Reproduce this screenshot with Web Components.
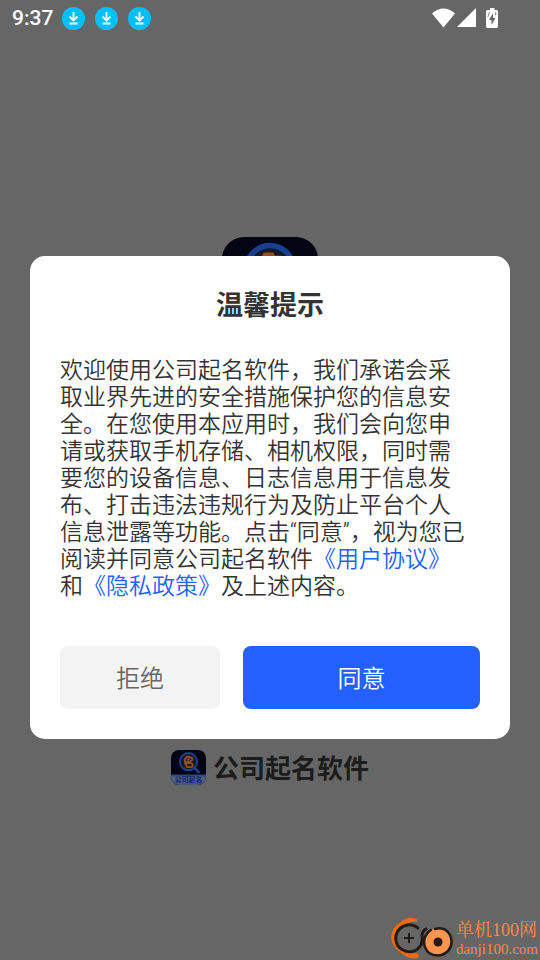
<!DOCTYPE html>
<html lang="zh-CN">
<head>
<meta charset="utf-8">
<meta name="viewport" content="width=device-width, initial-scale=1">
<title>公司起名软件</title>
<style>
html, body { margin: 0; }
body { background: #666; font-family: Roboto, "Noto Sans CJK SC", sans-serif; color: #333; }
</style>
</head>
<body>
<app-screen>
  <status-bar slot="status" time="9:37"></status-bar>
  <app-logo slot="hero"></app-logo>
  <brand-line slot="brand"><app-logo slot="icon" caption="公司起名"></app-logo>公司起名软件</brand-line>
  <consent-dialog slot="dialog" heading="温馨提示">欢迎使用公司起名软件，我们承诺会采取业界先进的安全措施保护您的信息安全。在您使用本应用时，我们会向您申请或获取手机存储、相机权限，同时需要您的设备信息、日志信息用于信息发布、打击违法违规行为及防止平台个人信息泄露等功能。点击“同意”，视为您已阅读并同意公司起名软件<policy-link>《用户协议》</policy-link>和<policy-link>《隐私政策》</policy-link>及上述内容。
    <action-button slot="actions">拒绝</action-button>
    <action-button slot="actions" primary>同意</action-button>
  </consent-dialog>
  <site-mark slot="mark"></site-mark>
</app-screen>
<script>
const define = (name, html, setup) => customElements.define(name, class extends HTMLElement {
  constructor() {
    super();
    this.attachShadow({ mode: 'open' }).innerHTML = html.trim();
  }
  connectedCallback() { if (setup) setup(this, this.shadowRoot); }
});

define('app-screen', `
<style>
:host { display: flex; flex-direction: column; min-height: 100vh; position: relative; overflow: hidden; }
main { flex: 1; display: flex; flex-direction: column; align-items: center; justify-content: space-between; padding: 201px 0 174px; }
::slotted([slot=hero]) { width: 96px; }
.layer { position: absolute; inset: 35px 0 0; display: flex; align-items: center; justify-content: center; padding: 0 30px; }
.mark { position: absolute; right: 2px; bottom: 1px; }
</style>
<slot name="status"></slot>
<main><slot name="hero"></slot><slot name="brand"></slot></main>
<div class="layer"><slot name="dialog"></slot></div>
<div class="mark"><slot name="mark"></slot></div>`);

define('status-bar', `
<style>
:host { display: flex; align-items: center; justify-content: space-between; height: 36px; padding: 0 42px 0 12px; color: #fff; }
div { display: flex; align-items: center; gap: 10px; }
time { font-size: 21px; line-height: 24px; font-weight: 500; }
svg { display: block; }
.notes { gap: 10px; }
.left { gap: 9px; }
.right { gap: 2px; }
.battery { margin-left: 8px; }
</style>
<div class="left"><time></time><div class="notes"></div></div>
<div class="right">
<svg width="23" height="20" viewBox="0 0 23 20" fill="#fff"><path d="M0 5.500Q11.500-4.500 23 5.500L11.500 19.500Z"/></svg>
<svg width="19" height="20" viewBox="0 0 19 20" fill="#fff"><path d="M19 0V19H0Z"/></svg>
<svg class="battery" width="12" height="20" viewBox="0 0 12 20"><path fill="#fff" d="M4 0H8.500V2H11L12 3V19L11 20H1L0 19V3L1 2H4Z"/><path fill="#666" d="M7 5L3 12H5.500V17L9.500 10H7ZM1.500 9L3 4.500L4 4L2 9.500ZM9 4L10.500 5L9.500 8Z"/></svg>
</div>`, (host, root) => {
  root.querySelector('time').textContent = host.getAttribute('time');
  root.querySelector('.notes').innerHTML = '<svg width="23" height="23" viewBox="0 0 23 23"><circle cx="11.5" cy="11.5" r="11.5" fill="#00bfff"/><path d="M11.500 5V13.500M7.500 9.500L11.500 13.500L15.500 9.500M7.500 16.500H15.500" fill="none" stroke="#fff" stroke-width="1.800"/></svg>'.repeat(3);
});

define('app-logo', `
<style>:host { display: block; } svg { display: block; width: 100%; height: auto; } text { font-weight: 900; }</style>
<svg viewBox="0 0 96 96" role="img" aria-label="logo">
<defs><clipPath id="c"><rect width="96" height="96" rx="22"/></clipPath>
<linearGradient id="g" x2="0" y2="1"><stop stop-color="#28406f"/><stop offset=".35" stop-color="#56657c"/><stop offset="1" stop-color="#44567a"/></linearGradient></defs>
<g clip-path="url(#c)"><rect width="96" height="96" fill="#030414"/>
<path d="M0 67H96V96H0Z" fill="url(#g)"/>
<circle cx="48" cy="32" r="23.500" fill="#151927" stroke="#173f93" stroke-width="5.500"/>
<path d="M64 49L76 61" stroke="#173f93" stroke-width="7" stroke-linecap="round"/>
<g fill="none" stroke="#94501f" stroke-width="5" stroke-linejoin="round"><path d="M43 18H50V21H58V27L52 32H38V25L42 22ZM46 24L50 28"/><rect x="42" y="36" width="17" height="11" rx="4"/><path d="M42 33L37 39"/></g>
<text x="48" y="88" text-anchor="middle" font-size="19" fill="#132a70"></text>
</g></svg>`, (host, root) => {
  const text = root.querySelector('text');
  if (host.hasAttribute('caption')) text.textContent = host.getAttribute('caption');
  else text.remove();
});

define('brand-line', `
<style>
:host { display: flex; align-items: flex-start; gap: 7px; font-size: 26px; line-height: 36px; font-weight: 700; color: #1c1c1c; }
::slotted(app-logo) { width: 35px; }
span { padding-top: 1px; margin-bottom: -1px; }
</style><slot name="icon"></slot><span><slot></slot></span>`);

define('consent-dialog', `
<style>
:host { display: block; flex: 1; }
section { background: #fff; border-radius: 15px; padding: 32px 30px 30px; }
h1 { margin: 0; text-align: center; font-size: 27px; line-height: 36px; font-weight: 700; color: #333; }
p { margin: 33px 0 46px; padding-right: 10px; font-size: 23px; line-height: 27px; font-weight: 350; color: #333; }
.actions { display: grid; grid-template-columns: 160fr 237fr; gap: 23px; }
</style>
<section role="dialog" aria-labelledby="t"><h1 id="t"></h1><p><slot></slot></p><div class="actions"><slot name="actions"></slot></div></section>`,
(host, root) => { root.querySelector('h1').textContent = host.getAttribute('heading'); });

define('policy-link', `<style>:host { display: inline; } a { color: #245fff; text-decoration: none; }</style><a href="#"><slot></slot></a>`);

define('action-button', `
<style>
:host { display: block; }
button { display: block; width: 100%; height: 63px; border: 0; border-radius: 8px; background: #f3f3f3; color: #666; font: inherit; font-weight: 350; font-size: 24px; line-height: 36px; padding: 2px 0 0; }
:host([primary]) button { background: #245fff; color: #fff; }
</style><button type="button"><slot></slot></button>`);

define('site-mark', `
<style>
:host { display: flex; align-items: flex-end; gap: 1px; color: #fb8b4b; font-family: "Liberation Serif", "Noto Serif CJK SC", "Noto Sans CJK SC", serif; }
svg { display: block; }
div { display: grid; padding-bottom: 1px; }
b { font-weight: 400; font-size: 18px; line-height: 20px; }
span { font-size: 15px; line-height: 18px; }
</style>
<svg width="66" height="42" viewBox="0 0 66 42" fill="none">
<path d="M27 3Q20-1 12 6Q3 11 3 21Q4 31 14 36Q20 42 29 40Q30 38 27 37Q17 38 10 30Q2 19 11 10Q17 4 27 4Z" fill="#ff6a00" stroke="#ff6a00" stroke-width="1.500"/>
<path d="M29 11A13.500 13.500 0 1 0 32 28Q34 24 33 18Q34 13 37 12" stroke="#221b18" stroke-width="3" stroke-linecap="round"/>
<path d="M15 21H25M20 16V26" stroke="#221b18" stroke-width="2"/>
<circle cx="49" cy="25" r="14" fill="#ff9350"/>
<path d="M46 12Q56 9 61 18Q65 27 59 34Q50 42 40 36Q33 29 36 20Q38 15 42 13" stroke="#221b18" stroke-width="2.500" stroke-linecap="round"/>
<circle cx="49" cy="25" r="4.500" fill="#221b18"/>
</svg>
<div><b>单机100网</b><span>danji100.com</span></div>`);
</script>
</body>
</html>
